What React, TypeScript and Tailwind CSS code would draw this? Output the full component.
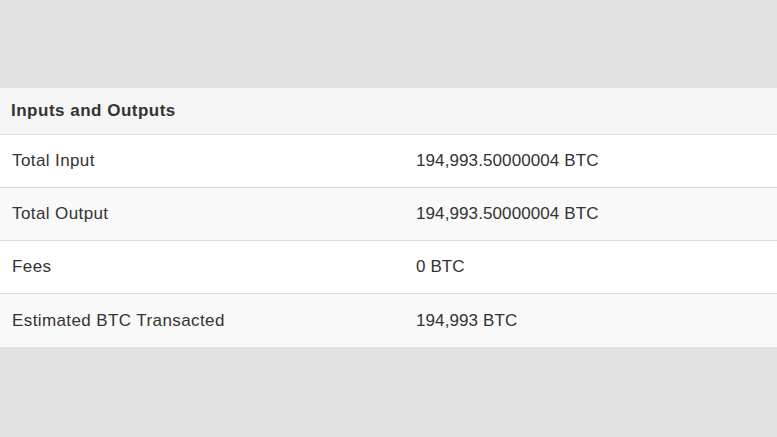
const rows = [
  { label: "Total Input", value: "194,993.50000004 BTC" },
  { label: "Total Output", value: "194,993.50000004 BTC" },
  { label: "Fees", value: "0 BTC" },
  { label: "Estimated BTC Transacted", value: "194,993 BTC" },
];

export default function App() {
  return (
    <div className="w-[777px] h-[437px] bg-[#e1e1e1] pt-[88px] font-['Liberation_Sans',Arial,sans-serif] text-[#333]">
      <div className="w-full">
        <div className="h-[47px] flex items-center px-[11px] bg-[#f5f5f5] border-b border-[#dcdcdc] text-[17px] font-bold tracking-[0.5px]">
          Inputs and Outputs
        </div>
        {rows.map((r, i) => (
          <div
            key={r.label}
            className={
              "h-[53px] flex items-center text-[17px] " +
              (i < rows.length - 1 ? "border-b border-[#dcdcdc] " : "") +
              (i % 2 === 0 ? "bg-white" : "bg-[#f9f9f9]")
            }
          >
            <div className="w-[416px] pl-[12px] tracking-[0.4px]">{r.label}</div>
            <div className="tracking-[0.1px]">{r.value}</div>
          </div>
        ))}
      </div>
    </div>
  );
}
